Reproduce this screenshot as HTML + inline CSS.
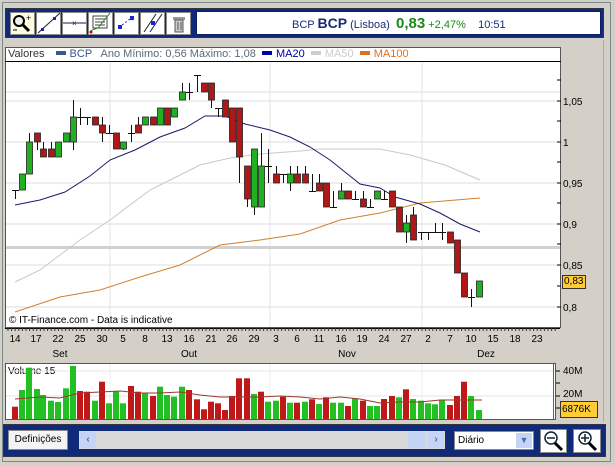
<!DOCTYPE html>
<html><head><meta charset="utf-8"><style>
*{margin:0;padding:0;box-sizing:border-box}
body{width:615px;height:465px;background:#d4d0c8;position:relative;overflow:hidden;font-family:"Liberation Sans",sans-serif;font-size:10px}
.abs{position:absolute}
.btn{position:absolute;top:12px;width:25px;height:23px;background:#fff;border:1px solid #8a8a8a}
</style></head><body>
<div class="abs" style="left:2px;top:2px;width:609px;height:460px;border:1px solid #7a8a8a"></div>
<div class="abs" style="left:5px;top:8px;width:599px;height:30px;background:#102a7a;border:1px solid #334"></div>
<div class="btn" style="left:10px;background:#fffbe0"></div>
<div class="btn" style="left:36px"></div>
<div class="btn" style="left:62px"></div>
<div class="btn" style="left:88px"></div>
<div class="btn" style="left:114px"></div>
<div class="btn" style="left:140px"></div>
<div class="btn" style="left:166px"></div>
<svg class="abs" style="left:0;top:0" width="200" height="40">
 <circle cx="19" cy="21" r="5" fill="#eee" stroke="#000" stroke-width="2"/><line x1="23" y1="25" x2="29" y2="31" stroke="#000" stroke-width="3"/><text x="26" y="21" font-size="9" font-family="Liberation Sans">+</text><line x1="13" y1="30" x2="17" y2="30" stroke="#000"/>
 <line x1="38" y1="33" x2="60" y2="13" stroke="#123" /><rect x="41" y="28" width="3" height="3" fill="#22a"/><rect x="53" y="17" width="3" height="3" fill="#22a"/>
 <line x1="63" y1="23" x2="86" y2="23" stroke="#123"/><text x="72" y="26" font-size="8" fill="#22a">×</text>
 <rect x="93" y="16" width="14" height="12" fill="none" stroke="#444"/><line x1="95" y1="19" x2="105" y2="19" stroke="#444"/><line x1="95" y1="22" x2="105" y2="22" stroke="#444"/><line x1="95" y1="25" x2="105" y2="25" stroke="#444"/><polyline points="90,33 92,30 98,28 110,13" fill="none" stroke="#1a8a1a"/><circle cx="91" cy="32" r="1.5" fill="#c00"/>
 <rect x="118" y="25" width="4" height="4" fill="#22c"/><rect x="130" y="16" width="4" height="4" fill="#22c"/><line x1="122" y1="25" x2="130" y2="19" stroke="#22c" stroke-dasharray="2,2"/>
 <line x1="144" y1="32" x2="156" y2="14" stroke="#123"/><line x1="150" y1="32" x2="162" y2="14" stroke="#123"/><rect x="151" y="21" width="4" height="4" fill="#22c"/>
 <rect x="173" y="17" width="12" height="3" fill="#999"/><rect x="175" y="20" width="8" height="12" fill="#ccc" stroke="#555"/><line x1="178" y1="22" x2="178" y2="30" stroke="#555"/><line x1="181" y1="22" x2="181" y2="30" stroke="#555"/>
</svg>
<div class="abs" style="left:196px;top:11px;width:405px;height:24px;background:#fff;border:1px solid #0a1e60"></div>
<div class="abs" style="left:292px;top:15px;font-size:11px;color:#1a2a7a;white-space:nowrap">BCP <b style="font-size:14px">BCP</b> <span>(Lisboa)</span>&nbsp; <b style="font-size:15px;color:#1a8a1a">0,83</b> <span style="color:#1a8a1a">+2,47%</span>&nbsp;&nbsp;&nbsp; <span style="color:#1a2a7a">10:51</span></div>
<div class="abs" style="left:5px;top:47px;width:556px;height:281px;background:#fff;border:1px solid #555"></div>
<div class="abs" style="left:5px;top:61px;width:556px;height:1px;background:#000"></div>
<div class="abs" style="left:8px;top:48px;white-space:nowrap;color:#333;font-size:11px">Valores <span style="display:inline-block;width:10px;height:4px;background:#3a5a8a;margin:0 4px 2px 8px"></span><span style="color:#3a5a8a">BCP</span> &nbsp; <span style="color:#5a6a7a">Ano Mínimo: 0,56 Máximo: 1,08</span> &nbsp;<span style="display:inline-block;width:10px;height:4px;background:#00a;margin:0 4px 2px 0"></span><span style="color:#00a">MA20</span> &nbsp;<span style="display:inline-block;width:10px;height:4px;background:#ccc;margin:0 4px 2px 0"></span><span style="color:#ccc">MA50</span> &nbsp;<span style="display:inline-block;width:10px;height:4px;background:#e07020;margin:0 4px 2px 0"></span><span style="color:#e07020">MA100</span></div>
<svg class="abs" id="ch" style="left:0;top:0" width="615" height="465"></svg>
<div class="abs" style="left:9px;top:315px;font-size:10px;color:#000">© IT-Finance.com - Data is indicative</div>
<div class="abs" style="left:562px;top:275px;width:24px;height:14px;background:#fc3;border:1px solid #333;font-size:10px;line-height:12px;padding-left:1px">0,83</div>
<div class="abs" style="left:5px;top:363px;width:551px;height:57px;background:#fff;border:1px solid #555"></div>
<div class="abs" style="left:8px;top:366px;font-size:10px">Volume 15</div>
<svg class="abs" id="vo" style="left:0;top:0" width="615" height="465"></svg>
<div class="abs" style="left:563px;top:366px;font-size:10px">40M</div>
<div class="abs" style="left:563px;top:389px;font-size:10px">20M</div>
<div class="abs" style="left:560px;top:401px;width:38px;height:17px;background:#fc3;border:1px solid #333;font-size:10px;line-height:15px;padding-left:1px">6876K</div>
<div class="abs" style="left:3px;top:424px;width:603px;height:33px;background:#102a7a;border:1px solid #334"></div>
<div class="abs" style="left:8px;top:430px;width:60px;height:20px;background:#f4f4f4;border:1px solid #888;font-size:10px;line-height:18px;text-align:center">Definições</div>
<div class="abs" style="left:79px;top:431px;width:366px;height:18px;background:#d8d8d8"></div>
<div class="abs" style="left:80px;top:432px;width:16px;height:16px;background:#c4d4f4;color:#4a6ab4;font-weight:bold;text-align:center;line-height:16px">‹</div>
<div class="abs" style="left:408px;top:432px;width:17px;height:16px;background:#c4d4f4"></div>
<div class="abs" style="left:428px;top:432px;width:16px;height:16px;background:#c4d4f4;color:#4a6ab4;font-weight:bold;text-align:center;line-height:16px">›</div>
<div class="abs" style="left:454px;top:431px;width:80px;height:19px;background:#fff;border:1px solid #888;font-size:10px;line-height:17px;padding-left:3px">Diário</div>
<div class="abs" style="left:516px;top:433px;width:16px;height:15px;background:#c4d4f4;color:#4a6ab4;font-size:9px;text-align:center;line-height:15px">▼</div>
<div class="abs" style="left:540px;top:429px;width:27px;height:24px;background:#fff;border:1px solid #888"></div>
<div class="abs" style="left:573px;top:429px;width:28px;height:24px;background:#fff;border:1px solid #888"></div>
<svg class="abs" style="left:0;top:0" width="615" height="465">
<circle cx="551" cy="438" r="6" fill="#fff" stroke="#123" stroke-width="1.5"/><line x1="547" y1="438" x2="555" y2="438" stroke="#123" stroke-width="1.5"/><line x1="555" y1="443" x2="562" y2="450" stroke="#000" stroke-width="3"/>
<circle cx="585" cy="438" r="6" fill="#fff" stroke="#123" stroke-width="1.5"/><line x1="581" y1="438" x2="589" y2="438" stroke="#123" stroke-width="1.5"/><line x1="585" y1="434" x2="585" y2="442" stroke="#123" stroke-width="1.5"/><line x1="589" y1="443" x2="596" y2="450" stroke="#000" stroke-width="3"/>
</svg>
<script>
var C=[[15,'d',190,190,190,199],[22,'g',174,190],[29,'g',142,174,133,174],[37,'r',133,142,133,150],[43,'r',149,157,142,157],[51,'r',149,157,142,157],[58,'g',142,157],[66,'g',133,142],[73,'g',117,142,100,150],[80,'d',117,117,108,125],[87,'d',117,117,117,125],[95,'r',117,125],[102,'r',125,133,117,142],[109,'d',133,133,125,133],[116,'r',133,149],[123,'g',142,149,142,150],[131,'d',133,133,125,142],[138,'r',125,133,117,133],[145,'g',117,125],[153,'r',117,125],[160,'g',108,125],[167,'r',108,125],[174,'g',108,117],[182,'g',92,100,83,100],[189,'d',92,92,83,100],[197,'d',75,75,75,92],[204,'r',83,92],[211,'r',83,100,83,108],[218,'d',108,108,108,117],[225,'r',100,117],[232,'r',108,142],[239,'r',108,157,108,183],[247,'r',166,199,166,207],[254,'g',149,207,149,215],[261,'g',166,207,133,207],[268,'d',166,166,149,183],[276,'r',174,183,166,183],[283,'d',174,174,174,183],[290,'g',174,183,166,191],[297,'r',174,183,166,183],[305,'r',174,183,166,183],[312,'d',191,191,174,191],[319,'r',183,191,174,191],[326,'r',183,207],[333,'d',207,207,191,207],[341,'g',191,199,183,199],[348,'r',191,199],[355,'d',199,199,191,199],[363,'r',199,207,191,207],[370,'d',207,207,199,207],[377,'g',191,199],[384,'d',199,199,191,199],[392,'r',191,207],[399,'r',207,232],[406,'g',223,232,215,243],[413,'r',215,240,207,240],[421,'d',232,232,232,240],[428,'d',232,232,232,240],[435,'d',232,232,223,232],[442,'d',232,232,223,240],[450,'r',232,243],[457,'r',240,273],[464,'r',273,297],[471,'d',297,297,289,307],[479,'g',281,297]];
var s='';
[92,101,142,183,224,265,307].forEach(function(y){s+='<line x1="6" x2="560" y1="'+y+'" y2="'+y+'" stroke="#ddd"/>'});
[110,270,422].forEach(function(x){s+='<line x1="'+x+'" x2="'+x+'" y1="62" y2="327" stroke="#e4e4e4"/>'});
s+='<rect x="6" y="246" width="554" height="3" fill="#d0d0d0"/>';
function pl(p,c){s+='<polyline fill="none" stroke="'+c+'" stroke-width="1" points="'+p+'"/>'}
pl('15,282 40,270 80,240 110,220 150,190 200,165 230,158 260,154 300,151 320,149 380,149 410,155 445,165 480,180','#c8c8c8');
pl('15,312 60,297 100,290 140,277 180,265 220,245 260,240 300,234 340,220 380,213 420,203 480,198','#d08030');
pl('15,205 40,200 65,192 90,176 110,160 135,150 160,137 185,128 205,116 225,116 245,124 270,130 290,137 310,147 330,160 345,172 360,184 380,188 395,197 420,204 440,213 460,224 480,232','#1a1a6a');
C.forEach(function(c){var x=c[0],t=c[2],b=c[3],wt=c.length>4?c[4]:t,wb=c.length>4?c[5]:b;
s+='<line x1="'+(x+.5)+'" x2="'+(x+.5)+'" y1="'+wt+'" y2="'+wb+'" stroke="#111"/>';
if(c[1]=='d'){s+='<line x1="'+(x-3)+'" x2="'+(x+4)+'" y1="'+(t+.5)+'" y2="'+(t+.5)+'" stroke="#111"/>'}
else s+='<rect x="'+(x-2.5)+'" y="'+t+'" width="6" height="'+(b-t)+'" fill="'+(c[1]=='g'?'#22b022':'#b01818')+'" stroke="#222" stroke-width="0.8"/>';});
[[101,'1,05'],[142,'1'],[183,'0,95'],[224,'0,9'],[265,'0,85'],[307,'0,8']].forEach(function(a){s+='<line x1="557" x2="561" y1="'+a[0]+'" y2="'+a[0]+'" stroke="#000"/><text x="563" y="'+(a[0]+4)+'" font-size="10" font-family="Liberation Sans">'+a[1]+'</text>'});
[80,121,162,203,244,286].forEach(function(y){s+='<line x1="557" x2="561" y1="'+y+'" y2="'+y+'" stroke="#000"/>'});
s+='<line x1="5" x2="560" y1="328.5" y2="328.5" stroke="#000"/>';
for(var x=8;x<556;x+=3.6)s+='<line x1="'+x.toFixed(1)+'" x2="'+x.toFixed(1)+'" y1="328" y2="331" stroke="#333"/>';
[[15,14],[36,17],[58,22],[80,25],[102,30],[123,5],[145,8],[167,13],[189,16],[211,21],[232,26],[254,29],[276,3],[297,6],[319,11],[341,16],[362,19],[384,24],[406,27],[428,2],[450,7],[471,10],[493,15],[515,18],[537,23]].forEach(function(a){s+='<text x="'+a[0]+'" y="342" text-anchor="middle" font-size="10" font-family="Liberation Sans">'+a[1]+'</text>'});
[[60,'Set'],[189,'Out'],[347,'Nov'],[486,'Dez']].forEach(function(a){s+='<text x="'+a[0]+'" y="357" text-anchor="middle" font-size="10" font-family="Liberation Sans">'+a[1]+'</text>'});
s+='<line x1="603.5" x2="603.5" y1="40" y2="422" stroke="#aaa"/>';
document.getElementById('ch').innerHTML=s;
var V=[260,210,143,207,225,242,246,205,138,213,215,242,185,250,213,250,198,215,220,228,200,225,230,200,210,238,268,245,250,270,228,175,175,222,215,245,242,230,248,248,245,238,252,232,248,248,258,235,242,258,258,237,228,232,208,237,242,250,253,240,255,228,185,228,270];
var VC='rggggggggrrgrgggrrgrggggrrrrrrrrrgrggrgrgrgrggrgrggrrgrgggggrrrgg';
var v='';
[371,396].forEach(function(y){v+='<line x1="6" x2="555" y1="'+y+'" y2="'+y+'" stroke="#e4e4e4"/>'});
[110,270,422].forEach(function(x){v+='<line x1="'+x+'" x2="'+x+'" y1="364" y2="419" stroke="#eee"/>'});
v+='<line x1="553.5" x2="553.5" y1="364" y2="419" stroke="#c33"/>';
C.forEach(function(c,i){var t=320+V[i]/3;v+='<rect x="'+(c[0]-3)+'" y="'+t.toFixed(1)+'" width="6" height="'+(419-t).toFixed(1)+'" fill="'+(VC[i]=='g'?'#22c022':'#c01818')+'"/>'});
v+='<polyline fill="none" stroke="#9a3a2a" points="15,399 40,397 60,398 80,393 100,392 120,391 140,393 160,393 180,392 200,395 220,397 240,397 260,397 280,396 300,397 320,399 340,397 360,399 380,403 400,402 420,402 440,400 460,400 482,400"/>';
[371,383,396,408].forEach(function(y){v+='<line x1="556" x2="560" y1="'+y+'" y2="'+y+'" stroke="#000"/>'});
document.getElementById('vo').innerHTML=v;
</script>
</body></html>
